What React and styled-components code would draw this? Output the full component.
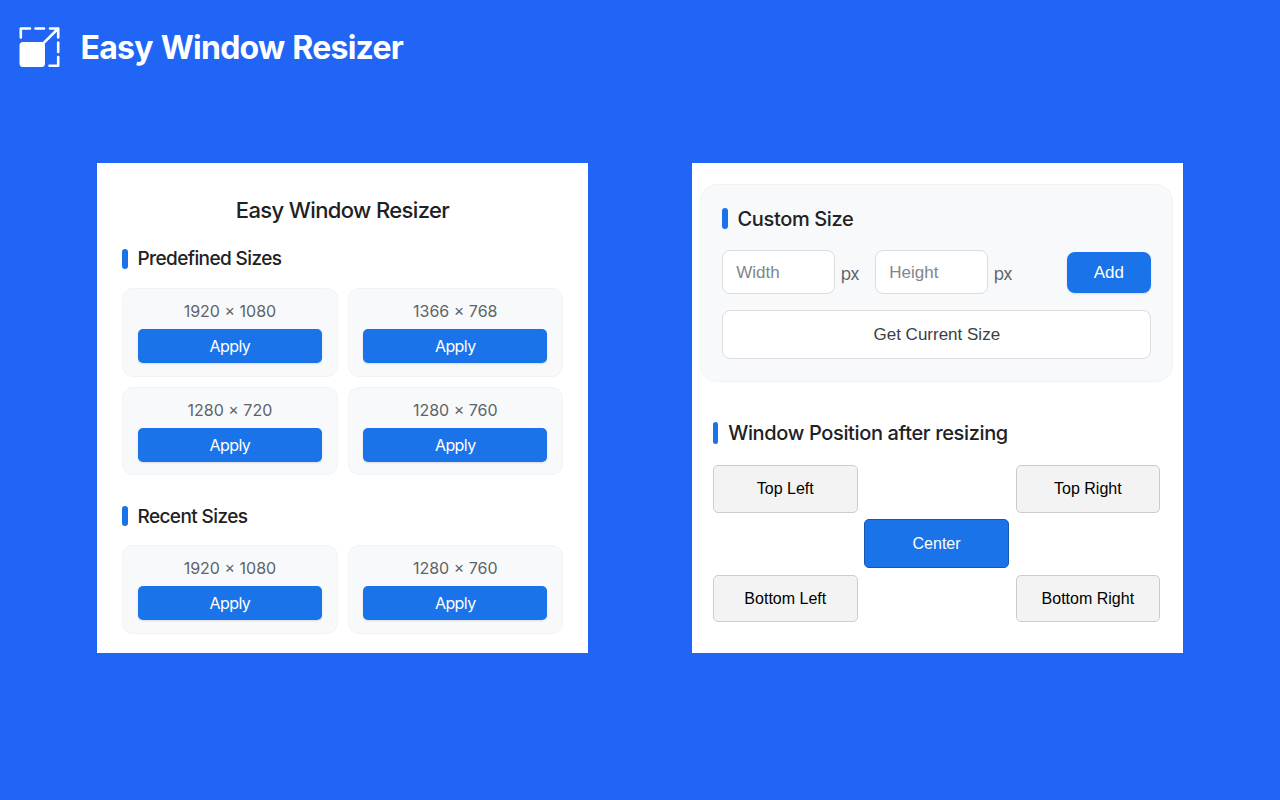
import React from "react";
import styled, { createGlobalStyle } from "styled-components";

const GlobalStyle = createGlobalStyle`
  *, *::before, *::after { box-sizing: border-box; }
  body { margin: 0; background: #2065f5; }
`;

const Page = styled.div`
  width: 1280px;
  height: 800px;
  background: #2065f5;
  overflow: hidden;
  font-family: Inter, "Liberation Sans", sans-serif;
  white-space: nowrap;
`;

const Header = styled.header`
  display: flex;
  align-items: center;
  gap: 20.6px;
  height: 94px;
  padding-left: 19px;
`;

const Logo = styled.svg`
  display: block;
  flex: none;
  width: 41px;
  height: 41px;
`;

const Brand = styled.h1`
  margin: 0;
  padding-top: 2px;
  color: #fff;
  font: 700 32px/46px Inter, sans-serif;
  letter-spacing: -0.75px;
  word-spacing: 1px;
`;

const Panels = styled.main`
  display: flex;
  gap: 104px;
  padding: 69px 0 0 97px;
`;

const Panel = styled.section`
  width: 491px;
  height: 490px;
  padding: ${(p) => p.$pad};
  background: #fff;
`;

const PanelTitle = styled.h2`
  margin: 0;
  text-align: center;
  color: #202124;
  font-size: 22px;
  font-weight: 500;
  line-height: 30px;
  letter-spacing: -0.63px;
`;

const Heading = styled.h3`
  display: flex;
  align-items: center;
  gap: 9.7px;
  height: ${(p) => p.$size + 3}px;
  margin: ${(p) => p.$margin};
  color: #202124;
  font-size: ${(p) => p.$size}px;
  line-height: ${(p) => p.$size + 4}px;
  font-weight: 500;
  letter-spacing: ${(p) => p.$track}px;

  &::before {
    content: "";
    width: 5.5px;
    height: ${(p) => p.$bar}px;
    border-radius: 3px;
    background: #1a73e8;
  }
`;

const SizeGrid = styled.div`
  display: grid;
  grid-template-columns: 215.4px 215.4px;
  gap: 10px;
`;

const SizeCard = styled.div`
  display: flex;
  flex-direction: column;
  height: 88.4px;
  padding: 12px 14.8px 0 14.6px;
  border: 1px solid #f1f3f4;
  border-radius: 11px;
  background: #f8f9fb;
  text-align: center;
`;

const SizeLabel = styled.span`
  color: #5f6368;
  font-size: 16px;
  line-height: 20px;
  margin-bottom: 8.1px;
`;

const PrimaryButton = styled.button`
  display: block;
  height: ${(p) => p.$height}px;
  width: ${(p) => p.$width || "100%"};
  margin: ${(p) => p.$drop || 0}px 0 0;
  padding: 0;
  border: 0;
  border-radius: ${(p) => p.$radius}px;
  background: #1a73e8;
  box-shadow: 0 1px 2px rgba(60, 64, 67, 0.16);
  color: #fff;
  font: ${(p) => p.$font};
  letter-spacing: ${(p) => p.$track || 0}px;
`;

const CustomCard = styled.div`
  height: 197.5px;
  padding: 21px 21px 0;
  border: 1px solid #f1f3f4;
  border-radius: 17px;
  background: #f8f9fb;
`;

const FieldRow = styled.div`
  display: flex;
  align-items: center;
  height: 44px;
  margin-bottom: 16px;
`;

const Field = styled.input`
  width: 113px;
  height: 44px;
  padding: 2px 13px 0;
  border: 1.5px solid #dadce0;
  border-radius: 8px;
  background: #fff;
  font: 17px "Liberation Sans", sans-serif;
  &::placeholder { color: #80868b; opacity: 1; }
`;

const Unit = styled.span`
  width: 40px;
  padding: 4px 0 0 5.5px;
  color: #5f6368;
  font-size: 17px;
  letter-spacing: -0.5px;
`;

const OutlineButton = styled.button`
  display: block;
  width: 429px;
  height: 49px;
  padding: 0;
  border: 1.5px solid #dadce0;
  border-radius: 8px;
  background: #fff;
  color: #3c4043;
  font: 17px "Liberation Sans", sans-serif;
`;

const Spacer = styled.div`
  flex: 1;
`;

const PositionSection = styled.div`
  padding: 0 12.5px 0 12.7px;
`;

const PositionGrid = styled.div`
  display: grid;
  grid-template-columns: repeat(3, 144.6px);
  grid-template-rows: 48px 49px 47px;
  grid-template-areas: "tl . tr" ". c ." "bl . br";
  gap: 6.7px;
`;

const PositionButton = styled.button`
  grid-area: ${(p) => p.$area};
  padding: 1px 0 0;
  border: 1.3px solid ${(p) => (p.$active ? "#1557b0" : "#ccc")};
  border-radius: 5px;
  background: ${(p) => (p.$active ? "#1a73e8" : "#f3f3f3")};
  color: ${(p) => (p.$active ? "#fff" : "#000")};
  font: 16px "Liberation Sans", sans-serif;
`;

const APPLY_FONT = "400 16px Inter, sans-serif";

function SizeList({ sizes }) {
  return (
    <SizeGrid>
      {sizes.map((size) => (
        <SizeCard key={size}>
          <SizeLabel>{size}</SizeLabel>
          <PrimaryButton $height={34} $radius={5} $track={-0.6} $font={APPLY_FONT}>Apply</PrimaryButton>
        </SizeCard>
      ))}
    </SizeGrid>
  );
}

const POSITIONS = [
  ["tl", "Top Left"],
  ["tr", "Top Right"],
  ["c", "Center"],
  ["bl", "Bottom Left"],
  ["br", "Bottom Right"],
];

export default function App() {
  return (
    <Page>
      <GlobalStyle />
      <Header>
        <Logo viewBox="0 0 41 41" fill="none" stroke="#fff" strokeWidth="2.6" strokeLinecap="round" strokeLinejoin="round">
          <rect x="0.5" y="15" width="25.5" height="25" rx="3.5" fill="#fff" stroke="none" />
          <path d="M1.8 10.5V1.5H11M16.5 1.5H25M31 1.5H39.2V10.5M39.2 1.5L24 16.7M39.2 15.5V25M39.2 30V38.8H30.5" />
        </Logo>
        <Brand>Easy Window Resizer</Brand>
      </Header>
      <Panels>
        <Panel $pad="32px 25.3px 0">
          <PanelTitle>Easy Window Resizer</PanelTitle>
          <Heading $size={19} $bar={20} $track={-0.6} $margin="22.5px 0 18.8px">Predefined Sizes</Heading>
          <SizeList sizes={["1920 × 1080", "1366 × 768", "1280 × 720", "1280 × 760"]} />
          <Heading $size={19} $bar={20} $track={-0.6} $margin="30.3px 0 17.9px">Recent Sizes</Heading>
          <SizeList sizes={["1920 × 1080", "1280 × 760"]} />
        </Panel>
        <Panel $pad="21px 10px 0 8.3px">
          <CustomCard>
            <Heading $size={20} $bar={21.5} $track={-0.35} $margin="1px 0 20.3px">Custom Size</Heading>
            <FieldRow>
              <Field placeholder="Width" />
              <Unit>px</Unit>
              <Field placeholder="Height" />
              <Unit>px</Unit>
              <Spacer />
              <PrimaryButton $height={41} $width="84.5px" $radius={8} $drop={1} $font={'17px "Liberation Sans", sans-serif'}>Add</PrimaryButton>
            </FieldRow>
            <OutlineButton>Get Current Size</OutlineButton>
          </CustomCard>
          <PositionSection>
            <Heading $size={20} $bar={21.5} $track={-0.35} $margin="40px 0 20.2px">Window Position after resizing</Heading>
            <PositionGrid>
              {POSITIONS.map(([area, label]) => (
                <PositionButton key={area} $area={area} $active={area === "c"}>{label}</PositionButton>
              ))}
            </PositionGrid>
          </PositionSection>
        </Panel>
      </Panels>
    </Page>
  );
}
